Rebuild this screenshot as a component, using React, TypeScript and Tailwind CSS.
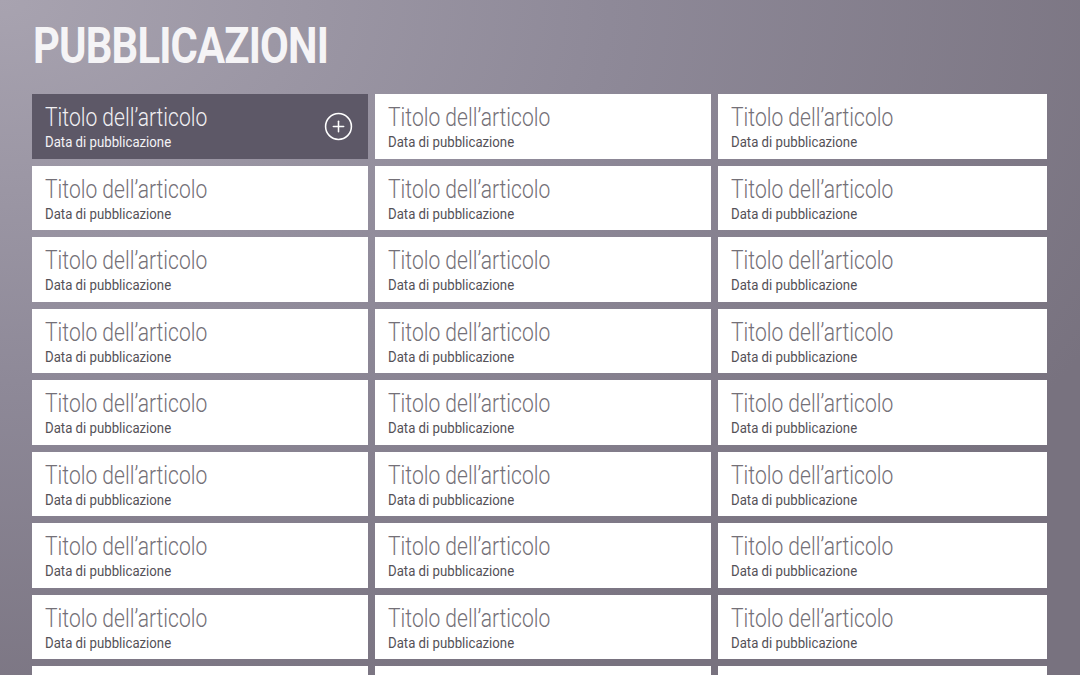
import {CirclePlus} from "lucide-react";

const rows = 9;
const cols = 3;

function Card({active}: {active?: boolean}) {
    return (
        <div
            className={
                active
                    ? "relative h-[64.5px] bg-[#5d5867] px-[13px] pt-[9px] overflow-hidden"
                    : "relative h-[64.5px] bg-white px-[13px] pt-[9px] overflow-hidden"
            }
        >
            <div className="whitespace-nowrap">
                <span
                    className={
                        active
                            ? "inline-block origin-left scale-x-[0.81] font-['Roboto'] font-light text-[26px] leading-[28px] text-[#f1f0f3]"
                            : "inline-block origin-left scale-x-[0.81] font-['Roboto'] font-light text-[26px] leading-[28px] text-[#747077]"
                    }
                >
                    Titolo dell’articolo
                </span>
            </div>
            <div className="whitespace-nowrap -mt-[3px]">
                <span
                    className={
                        active
                            ? "inline-block origin-left scale-x-[0.88] font-['Roboto'] text-[15px] leading-[18px] text-[#f4f3f6]"
                            : "inline-block origin-left scale-x-[0.88] font-['Roboto'] text-[15px] leading-[18px] text-[#545157]"
                    }
                >
                    Data di pubblicazione
                </span>
            </div>
            {active && (
                <CirclePlus className="absolute right-[14px] top-[17px] text-white" size={31} strokeWidth={1.2}/>
            )}
        </div>
    );
}

export default function App() {
    return (
        <div
            className="h-[675px] w-[1080px] overflow-hidden bg-[radial-gradient(ellipse_at_top_left,#a8a3b0_0%,#8e8998_40%,#78727f_80%)] font-['Roboto',sans-serif]">
            <h1 className="pl-[33px] pt-[19px] h-[94px] whitespace-nowrap">
                <span className="inline-block origin-left scale-x-[0.835] font-['Roboto'] font-bold text-[50px] leading-[54px] tracking-[-1px] text-[#f5f4f6]">
                    PUBBLICAZIONI
                </span>
            </h1>
            <div className="ml-[32px] grid grid-cols-[336px_336px_329px] gap-x-[7px] gap-y-[7px]">
                {Array.from({length: rows * cols}).map((_, i) => (
                    <Card key={i} active={i === 0}/>
                ))}
            </div>
        </div>
    );
}
